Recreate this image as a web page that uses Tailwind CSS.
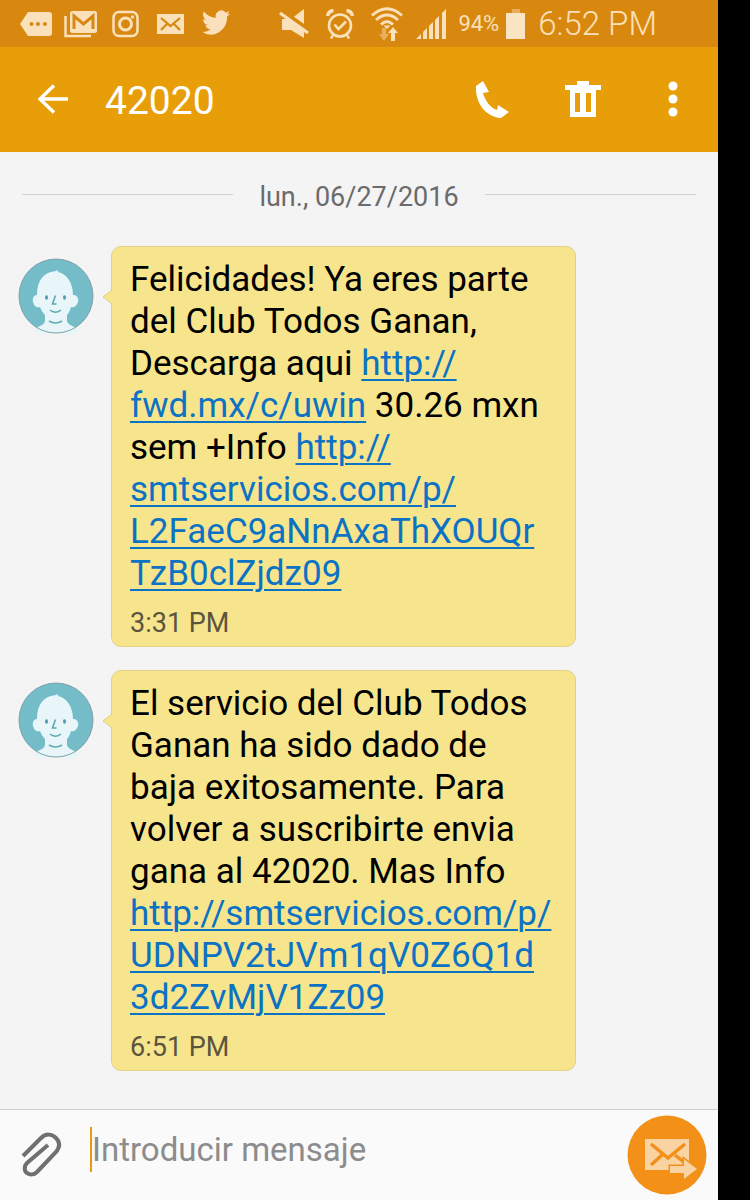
<!DOCTYPE html>
<html lang="es">
<head>
  <meta charset="UTF-8" />
  <meta name="viewport" content="width=device-width, initial-scale=1.0"/>
  <title>42020 - Mensajes</title>
  <script src="https://cdn.jsdelivr.net/npm/@tailwindcss/browser@4"></script>
</head>
<body class="bg-black pr-8 font-['Roboto','Open_Sans',sans-serif]">
  <!-- shared avatar drawing -->
  <svg class="hidden">
    <symbol id="avatar" viewBox="0 0 76 76">
      <clipPath id="round"><circle cx="38" cy="38" r="37"/></clipPath>
      <circle cx="38" cy="38" r="37" fill="#74bdc8"/>
      <g clip-path="url(#round)">
        <path fill="#e8f6fa" d="M19 37C19 22 26 14 38 13l2-1v2c9 2 15 11 15 23 4 0 6 3 5 7s-4 6-7 5c-1 3-2 6-4 8v6c1 4 6 5 10 7v10H17V70c5-2 9-3 10-7v-6c-2-2-4-5-5-8-4 1-6-1-7-5-1-4 1-7 4-7z"/>
      </g>
      <ellipse cx="28.500" cy="39.500" rx="1.500" ry="2.200" fill="#4f9dab"/>
      <ellipse cx="46.500" cy="39.500" rx="1.500" ry="2.200" fill="#4f9dab"/>
      <path d="M37.500 37.500l-3 8.500h4M32 52c3 3 8 3 11 0M31 63c4 2.500 9 2.500 13 0" fill="none" stroke="#5aa9b6" stroke-width="1.600"/>
      <circle cx="38" cy="38" r="37" fill="none" stroke="#7fa3a8" stroke-width="1"/>
    </symbol>
  </svg>

  <div class="min-h-screen flex flex-col bg-[#f4f4f4]">
    <div class="h-[47px] shrink-0 flex items-center justify-between bg-[#d8880e] text-[#fae0bb] pl-5 pr-[61px]">
      <div class="flex items-center">
        <svg class="w-8 h-[30px]" viewBox="0 0 32 30" fill="currentColor">
          <path d="M8 3h21q3 0 3 3v18q0 3-3 3H8L0 15z"/>
          <g fill="#d8880e"><circle cx="11.500" cy="15" r="2"/><circle cx="18" cy="15" r="2"/><circle cx="25" cy="15" r="2"/></g>
        </svg>
        <svg class="ml-3 w-[33px] h-[30px]" viewBox="0 0 33 30">
          <path d="M1.500 7v20H27" fill="none" stroke="currentColor" stroke-width="2.500"/>
          <rect x="6" y="2" width="27" height="22" rx="2.500" fill="currentColor"/>
          <path d="M10 20V7l9.500 8L29 7v13" fill="none" stroke="#d8880e" stroke-width="3"/>
        </svg>
        <svg class="ml-[15px] w-7 h-[30px]" viewBox="0 0 28 30" fill="none" stroke="currentColor">
          <rect x="1.500" y="3" width="24" height="24" rx="5.500" stroke-width="2.500"/>
          <circle cx="13.500" cy="15" r="6" stroke-width="3"/>
          <circle cx="20.500" cy="8" r="1.700" fill="currentColor" stroke="none"/>
        </svg>
        <svg class="ml-[17px] w-[27px] h-[30px]" viewBox="0 0 27 30">
          <path d="M0 5h27v20H0z" fill="currentColor"/>
          <path d="M4 9l9.500 8L23 9M4 21l6-6M23 21l-6-6" fill="none" stroke="#d8880e" stroke-width="2.200"/>
        </svg>
        <svg class="ml-[18px] w-7 h-[27px]" viewBox="1 2.500 22 20" preserveAspectRatio="none" fill="currentColor">
          <path d="M23 5a9 9 0 0 1-2.600.7 4.500 4.500 0 0 0 2-2.500 9 9 0 0 1-2.900 1.100 4.500 4.500 0 0 0-7.700 4.100A12.800 12.800 0 0 1 2.500 3.700a4.500 4.500 0 0 0 1.400 6 4.500 4.500 0 0 1-2-.6 4.500 4.500 0 0 0 3.600 4.500 4.500 4.500 0 0 1-2 .1 4.500 4.500 0 0 0 4.200 3.100A9 9 0 0 1 1 18.700a12.800 12.800 0 0 0 19.700-11.400A9 9 0 0 0 23 5z"/>
        </svg>
      </div>
      <div class="flex items-center">
        <svg class="w-[31px] h-[30px]" viewBox="0 0 31 30">
          <path d="M3 10h9L25 0v29L12 21H3z" fill="currentColor"/>
          <path d="M2 1l28 20" stroke="#d8880e" stroke-width="4"/>
          <path d="M1 4l28 20" stroke="currentColor" stroke-width="3.200"/>
        </svg>
        <svg class="ml-4 w-7 h-[30px]" viewBox="0 0 28 30" fill="none" stroke="currentColor">
          <circle cx="14" cy="16.500" r="11" stroke-width="2.600"/>
          <path d="M8.500 15.500l4 4.500 7.500-7.500" stroke-width="2.600"/>
          <path d="M1.500 7q1-5 6-5.500M20.500 1.500q5 .5 6 5.500" stroke-width="3.500"/>
          <path d="M7 26l-2 3.500M21 26l2 3.500" stroke-width="2.500"/>
        </svg>
        <svg class="ml-[17px] w-8 h-9" viewBox="0 0 32 36" fill="none" stroke="currentColor">
          <path d="M1 9.500Q16-4 31 9.500M5 14q11-10 22 0M10 18.500q6-6 12 0" stroke-width="3"/>
          <path d="M12.500 19.500h7L16 23z" fill="currentColor" stroke="none"/>
          <path d="M17 27h3v8h4v-8h3l-5-6z" fill="currentColor" stroke="none"/>
          <path d="M8 28h3v-6h4v6h3l-5 7z" fill="#e9ad5c" stroke="none"/>
        </svg>
        <svg class="ml-[13px] w-[30px] h-[30px]" viewBox="0 0 30 30" fill="currentColor">
          <path d="M0 30l5-5v5zM7 23l4-4v11H7zM13 17l4-4v17h-4zM19 11l4-4v23h-4zM26 4l4-4v30h-4z"/>
        </svg>
        <span class="ml-3 text-[22px] leading-6">94%</span>
        <svg class="ml-[7px] w-5 h-[30px]" viewBox="0 0 20 30">
          <path d="M6 0h8v4H6z" fill="#e9ad5c"/>
          <path d="M0 4h19v26H0z" fill="#fbe4c4"/>
        </svg>
        <span class="ml-3 text-[33px] leading-9 font-light">6:52 PM</span>
      </div>
    </div>

    <header class="h-[105px] shrink-0 flex items-center bg-[#e89e08] text-white pl-[37px] pr-[39px]">
      <button type="button" aria-label="Atrás">
        <svg class="w-8 h-[30px] mb-0.5" viewBox="0 0 32 30" fill="none" stroke="currentColor" stroke-width="3.400">
          <path d="M17 1.500L3 15l14 13.500M3 15h28"/>
        </svg>
      </button>
      <h1 class="ml-9 flex-1 pt-0.5 text-[39px] leading-[48px]">42020</h1>
      <button type="button" aria-label="Llamar">
        <svg class="w-[34px] h-[38px] mb-0.5" viewBox="0 0 34 38" fill="currentColor">
          <path d="M8 1L1 6C0 22 10 37 26 38l8-6-11-7-1 5C15 28 10 20 8 13l6-1z"/>
        </svg>
      </button>
      <button type="button" aria-label="Eliminar" class="ml-14">
        <svg class="w-9 h-9 mb-0.5" viewBox="0 0 36 36" fill="currentColor">
          <path fill-rule="evenodd" d="M0 4h12V0h12v4h12v5h-5v27H5V9H0zM10 12v19h5V12zM21 12v19h5V12z"/>
        </svg>
      </button>
      <button type="button" aria-label="Más opciones" class="ml-[66px]">
        <svg class="w-3 h-9 mb-0.5" viewBox="0 0 12 36" fill="currentColor">
          <circle cx="6" cy="5" r="4.500"/><circle cx="6" cy="18" r="4.500"/><circle cx="6" cy="31" r="4.500"/>
        </svg>
      </button>
    </header>

    <main class="flex-1 px-[18px] pb-9">
      <div class="flex items-center gap-[26px] h-[94px] px-1 pb-2.5 text-[#6b6b6b]">
        <span class="flex-1 h-px bg-[#d2d2d2]"></span>
        <time datetime="2016-06-27" class="pt-1.5 text-[27px] leading-8">lun., 06/27/2016</time>
        <span class="flex-1 h-px bg-[#d2d2d2]"></span>
      </div>

      <div class="flex items-start gap-[17px] mb-[23px]">
        <svg class="w-[76px] h-[76px] shrink-0 mt-3"><use href="#avatar"/></svg>
        <div class="relative w-[465px] rounded-[10px] border border-[#e0d08a] bg-[#f6e58c] px-[18px] pt-3 pb-2">
          <svg class="absolute -left-[10px] top-[42px] w-[11px] h-4" viewBox="0 0 11 16"><path d="M11 0L1 8l10 8z" fill="#f6e58c"/><path d="M10 1L1 8l9 7" fill="none" stroke="#e0d08a"/></svg>
          <p class="text-[35px] leading-[42px] text-black whitespace-nowrap">
            Felicidades! Ya eres parte<br>
            del Club Todos Ganan,<br>
            Descarga aqui <a href="#" class="text-[#0b72c4] underline decoration-2 underline-offset-4">http://<br>fwd.mx/c/uwin</a> 30.26 mxn<br>
            sem +Info <a href="#" class="text-[#0b72c4] underline decoration-2 underline-offset-4">http://<br>smtservicios.com/p/<br>L2FaeC9aNnAxaThXOUQr<br>TzB0clZjdz09</a>
          </p>
          <time class="mt-3 -mb-px block text-[27px] leading-8 text-[#5b5540]">3:31 PM</time>
        </div>
      </div>

      <div class="flex items-start gap-[17px]">
        <svg class="w-[76px] h-[76px] shrink-0 mt-3"><use href="#avatar"/></svg>
        <div class="relative w-[465px] rounded-[10px] border border-[#e0d08a] bg-[#f6e58c] px-[18px] pt-3 pb-2">
          <svg class="absolute -left-[10px] top-[42px] w-[11px] h-4" viewBox="0 0 11 16"><path d="M11 0L1 8l10 8z" fill="#f6e58c"/><path d="M10 1L1 8l9 7" fill="none" stroke="#e0d08a"/></svg>
          <p class="text-[35px] leading-[42px] text-black whitespace-nowrap">
            El servicio del Club Todos<br>
            Ganan ha sido dado de<br>
            baja exitosamente. Para<br>
            volver a suscribirte envia<br>
            gana al 42020. Mas Info<br>
            <a href="#" class="text-[#0b72c4] underline decoration-2 underline-offset-4">http://smtservicios.com/p/<br>UDNPV2tJVm1qV0Z6Q1d<br>3d2ZvMjV1Zz09</a>
          </p>
          <time class="mt-3 -mb-px block text-[27px] leading-8 text-[#5b5540]">6:51 PM</time>
        </div>
      </div>
    </main>

    <form class="h-[91px] shrink-0 flex items-center border-t border-[#cfcfcf] bg-[#fafafa] pl-5 pr-[11px]">
      <button type="button" aria-label="Adjuntar">
        <svg class="w-[42px] h-[46px]" viewBox="0 0 42 46" fill="none" stroke="#707070" stroke-width="4">
          <path d="M3 24L21 6c5-5 11-4 15 0s4 9 0 14L17 40c-3 3-7 3-10 1s-3-7 0-10L28 13"/>
        </svg>
      </button>
      <span class="ml-7 w-[2px] h-[45px] mb-3 bg-[#e59b13]"></span>
      <input type="text" aria-label="Mensaje" placeholder="Introducir mensaje" class="flex-1 min-w-0 h-12 mb-2.5 text-[33px] text-[#222] placeholder:text-[#8c8c8c] placeholder:opacity-100 outline-none bg-transparent">
      <button type="submit" aria-label="Enviar">
        <svg class="w-[80px] h-[80px]" viewBox="0 0 80 80">
          <circle cx="40" cy="40" r="39.500" fill="#f29018"/>
          <path d="M18 24h44v31H18z" fill="#fad3a3"/>
          <path d="M24 29l17 14 17-14M24 50l11-10M48 40l10 8" fill="none" stroke="#f29018" stroke-width="3.500"/>
          <path d="M43 51h14v-7l13 10-13 10v-6H43z" fill="#fad3a3" stroke="#f29018" stroke-width="3" paint-order="stroke"/>
        </svg>
      </button>
    </form>
  </div>
</body>
</html>
